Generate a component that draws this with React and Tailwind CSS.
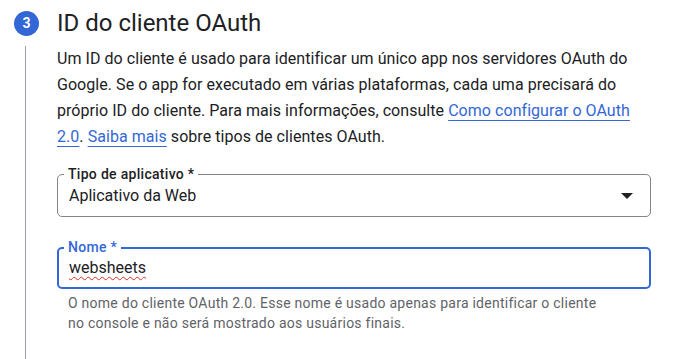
import React from "react";

function App() {
    return (
        <div className="w-[699px] h-[359px] overflow-hidden bg-white font-['Roboto',sans-serif] text-[#202124]">
            <div className="flex items-center h-[46px]">
                <div className="ml-[14px] w-[25px] h-[25px] rounded-full bg-[#3367d6] text-white text-[14px] font-bold flex items-center justify-center">
                    3
                </div>
                <h1 className="ml-[18px] text-[24px] leading-[32px]">ID do cliente OAuth</h1>
            </div>

            <div className="ml-[25px] h-[313px] border-l border-[#9aa0a6] pl-[31px]">
                <div className="w-[594px]">
                    <p className="text-[16px] leading-[26px] tracking-[0.05px] whitespace-nowrap">
                        Um ID do cliente é usado para identificar um único app nos servidores OAuth do
                        <br />
                        Google. Se o app for executado em várias plataformas, cada uma precisará do
                        <br />
                        próprio ID do cliente. Para mais informações, consulte{" "}
                        <a className="text-[#3367d6] underline decoration-[#3367d6] underline-offset-[4px]">
                            Como configurar o OAuth
                            <br />
                            2.0
                        </a>
                        .{" "}
                        <a className="text-[#3367d6] underline decoration-[#3367d6] underline-offset-[4px]">Saiba mais</a>{" "}
                        sobre tipos de clientes OAuth.
                    </p>

                    <div className="relative mt-[24px] h-[43px] border border-[#80868b] rounded-[5px] flex items-center pl-[11px] pr-[17px]">
                        <span className="absolute -top-[9px] left-[6px] px-[4px] bg-white text-[14px] leading-[16px] tracking-[0.3px] font-medium text-[#202124]">
                            Tipo de aplicativo *
                        </span>
                        <span className="flex-1 text-[16px]">Aplicativo da Web</span>
                        <svg width="12" height="6" viewBox="0 0 12 6">
                            <path d="M0 0h12L6 6z" fill="#202124" />
                        </svg>
                    </div>

                    <div className="relative mt-[30px] h-[42px] border-2 border-[#3367d6] rounded-[5px] flex items-center pl-[10px]">
                        <span className="absolute -top-[10px] left-[5px] px-[4px] bg-white text-[14px] leading-[16px] tracking-[0.3px] font-medium text-[#3367d6]">
                            Nome *
                        </span>
                        <span className="text-[16px] underline decoration-wavy decoration-[#d93025] decoration-1 underline-offset-[3px]">
                            websheets
                        </span>
                    </div>

                    <p className="mt-[4px] pl-[11px] text-[14px] leading-[20px] tracking-[0.25px] text-[#5f6368] whitespace-nowrap">
                        O nome do cliente OAuth 2.0. Esse nome é usado apenas para identificar o cliente
                        <br />
                        no console e não será mostrado aos usuários finais.
                    </p>
                </div>
            </div>
        </div>
    );
}

export default App;
